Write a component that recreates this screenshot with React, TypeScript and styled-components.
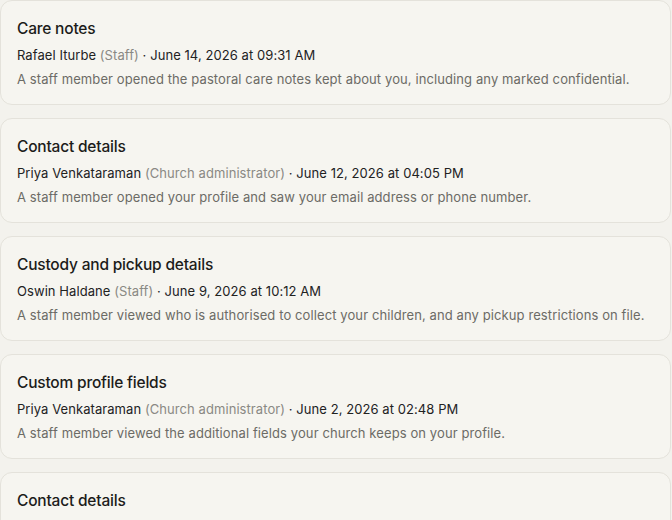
import React from 'react';
import styled, { createGlobalStyle } from 'styled-components';

interface AccessEvent {
  title: string;
  name: string;
  role: string;
  when: string;
  detail: string;
}

const events: AccessEvent[] = [
  {
    title: 'Care notes',
    name: 'Rafael Iturbe',
    role: 'Staff',
    when: 'June 14, 2026 at 09:31 AM',
    detail:
      'A staff member opened the pastoral care notes kept about you, including any marked confidential.',
  },
  {
    title: 'Contact details',
    name: 'Priya Venkataraman',
    role: 'Church administrator',
    when: 'June 12, 2026 at 04:05 PM',
    detail: 'A staff member opened your profile and saw your email address or phone number.',
  },
  {
    title: 'Custody and pickup details',
    name: 'Oswin Haldane',
    role: 'Staff',
    when: 'June 9, 2026 at 10:12 AM',
    detail:
      'A staff member viewed who is authorised to collect your children, and any pickup restrictions on file.',
  },
  {
    title: 'Custom profile fields',
    name: 'Priya Venkataraman',
    role: 'Church administrator',
    when: 'June 2, 2026 at 02:48 PM',
    detail: 'A staff member viewed the additional fields your church keeps on your profile.',
  },
  {
    title: 'Contact details',
    name: 'Priya Venkataraman',
    role: 'Church administrator',
    when: 'May 28, 2026 at 11:20 AM',
    detail: 'A staff member opened your profile and saw your email address or phone number.',
  },
];

const GlobalStyle = createGlobalStyle`
  html, body {
    margin: 0;
    padding: 0;
    background: #f3f2ed;
    font-family: Inter, 'Noto Sans', sans-serif;
    -webkit-font-smoothing: antialiased;
  }
`;

const List = styled.ul`
  list-style: none;
  margin: 0;
  padding: 0 1px 0 0;
  display: flex;
  flex-direction: column;
  gap: 13px;
  height: 520px;
  overflow: hidden;
`;

const Card = styled.li`
  flex-shrink: 0;
  background: #f6f5f0;
  border: 1px solid #e4e2db;
  border-radius: 12px;
  padding: 16px 16px 14px;
`;

const Title = styled.h3`
  margin: 0;
  font-size: 15.5px;
  line-height: 24px;
  font-weight: 500;
  letter-spacing: -0.2px;
  color: #1c1c1a;
`;

const Meta = styled.div`
  margin-top: 3px;
  font-size: 13px;
  line-height: 22px;
  letter-spacing: 0.07px;
  color: #22221f;
`;

const Role = styled.span`
  color: #8a8984;
`;

const Detail = styled.p`
  margin: 2px 0 0;
  font-size: 13px;
  line-height: 22px;
  letter-spacing: 0.1px;
  color: #6c6b66;
`;

const App: React.FC = () => (
  <>
    <GlobalStyle />
    <List>
      {events.map((e, i) => (
        <Card key={i}>
          <Title>{e.title}</Title>
          <Meta>
            {e.name} <Role>({e.role})</Role> · {e.when}
          </Meta>
          <Detail>{e.detail}</Detail>
        </Card>
      ))}
    </List>
  </>
);

export default App;
